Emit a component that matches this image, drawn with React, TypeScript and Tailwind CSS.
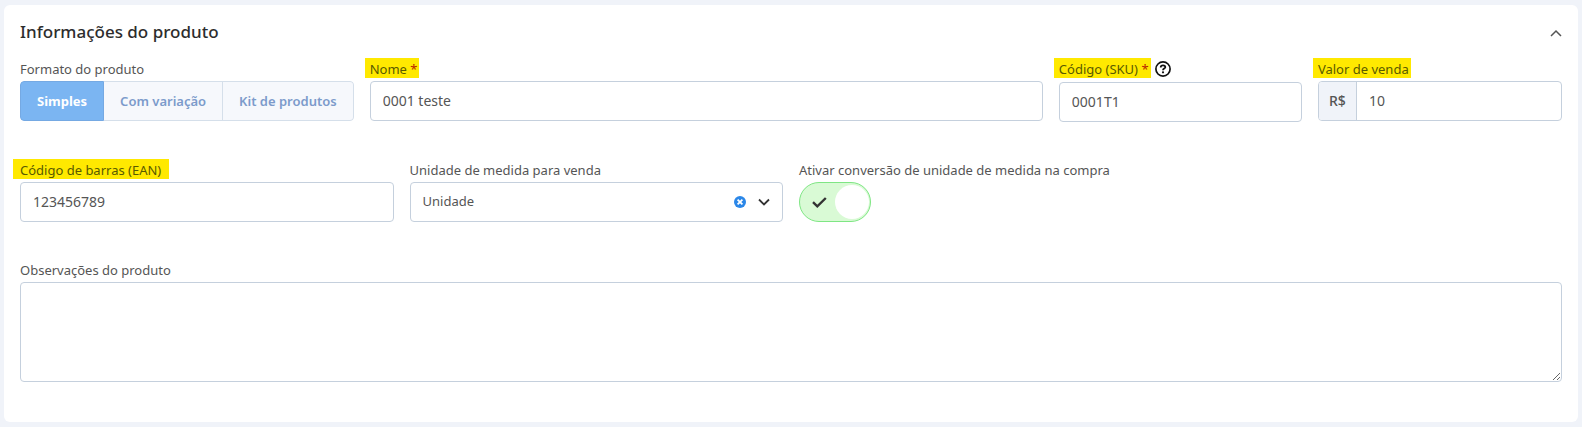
import React, { useState } from 'react';
import clsx from 'clsx';

const FORMATS = ['Simples', 'Com variação', 'Kit de produtos'];

const inputClass =
  'h-10 w-full min-w-0 rounded border border-[#c5d0dd] bg-white px-3 pb-0.5 text-sm text-[#555555] outline-none focus:border-[#3b8beb]';

const Mark = ({ wide, children }: { wide?: boolean; children: React.ReactNode }) => (
  <mark
    className={clsx(
      'inline-block h-5 bg-[#ffe900] align-top whitespace-nowrap text-[#595a00]',
      wide ? '-ml-[7px] pl-[7px] pr-2' : '-ml-[5px] pl-[5px] pr-0.5'
    )}
  >
    {children}
  </mark>
);

const Required = () => <span className="text-[#b81d00]">*</span>;

const App: React.FC = () => {
  const [open, setOpen] = useState(true);
  const [format, setFormat] = useState('Simples');
  const [unit, setUnit] = useState('Unidade');
  const [conversion, setConversion] = useState(true);

  return (
    <main className="min-h-screen bg-[#f0f3f9] px-1 py-[5px] font-['Noto_Sans',sans-serif] text-[13px] leading-[22px] text-[#555555]">
      <section className="rounded-md bg-white px-4 pt-3 pb-10">
        <div className="flex h-[41px] items-start justify-between">
          <h2 className="text-[17px] leading-[30px] font-medium text-[#2d2d2d]">Informações do produto</h2>
          <button type="button" aria-label="Recolher" aria-expanded={open} onClick={() => setOpen(!open)} className="flex h-8 items-center">
            <svg width="12" height="8" viewBox="0 0 12 8" fill="none" stroke="#555" strokeWidth="1.5">
              <path d="M1 7 6 2 11 7" />
            </svg>
          </button>
        </div>

        {open && (
          <form className="flex flex-col gap-[37px]">
            <div className="grid grid-cols-[auto_673fr_243fr_244fr] items-start gap-4">
              <div className="flex flex-col gap-px">
                <span id="formato">Formato do produto</span>
                <div role="group" aria-labelledby="formato" className="flex h-10 overflow-hidden rounded">
                  {FORMATS.map((item) => (
                    <button
                      key={item}
                      type="button"
                      aria-pressed={format === item}
                      onClick={() => setFormat(item)}
                      className={clsx(
                        'border-y border-r px-4 text-[13px] whitespace-nowrap first:rounded-l first:border-l last:rounded-r',
                        format === item
                          ? 'border-[#75a9e3] bg-[#7bb5f2] font-bold text-white'
                          : 'border-[#d5dfea] bg-[#f6f8fc] font-semibold text-[#7c9bcb]'
                      )}
                    >
                      {item}
                    </button>
                  ))}
                </div>
              </div>

              <div className="flex flex-col gap-px">
                <label htmlFor="nome"><Mark>Nome <Required /></Mark></label>
                <input id="nome" defaultValue="0001 teste" className={inputClass} />
              </div>

              <div className="flex flex-col gap-px">
                <div className="flex h-[23px] items-start gap-1">
                  <label htmlFor="sku"><Mark>Código (SKU) <Required /></Mark></label>
                  <button type="button" aria-label="Ajuda" className="flex h-[22px] items-center">
                    <svg width="16" height="16" viewBox="0 0 16 16" fill="none" stroke="#111">
                      <circle cx="8" cy="8" r="7.1" strokeWidth="1.7" />
                      <path d="M5.7 6.5C5.7 5.1 6.7 4.4 8 4.4S10.3 5.1 10.3 6.2C10.3 7.6 8 7.6 8 9.2" strokeWidth="1.8" />
                      <circle cx="8" cy="11.3" r="1.1" fill="#111" stroke="none" />
                    </svg>
                  </button>
                </div>
                <input id="sku" defaultValue="0001T1" className={inputClass} />
              </div>

              <div className="flex flex-col gap-px">
                <label htmlFor="valor"><Mark>Valor de venda</Mark></label>
                <div className="flex h-10 overflow-hidden rounded border border-[#c5d0dd]">
                  <span className="flex w-[38px] shrink-0 items-center justify-center border-r border-[#c5d0dd] bg-[#f0f3f9] text-sm font-medium">R$</span>
                  <input id="valor" defaultValue="10" className="w-full min-w-0 px-3 text-sm outline-none" />
                </div>
              </div>
            </div>

            <div className="grid grid-cols-4 items-start gap-4">
              <div className="flex flex-col gap-px">
                <label htmlFor="ean"><Mark wide>Código de barras (EAN)</Mark></label>
                <input id="ean" defaultValue="123456789" className={inputClass} />
              </div>

              <div className="flex flex-col gap-px">
                <label htmlFor="unidade">Unidade de medida para venda</label>
                <div className="flex h-10 items-center rounded border border-[#c5d0dd] pr-3">
                  <select
                    id="unidade"
                    value={unit}
                    onChange={(e) => setUnit(e.target.value)}
                    className="h-full w-full min-w-0 appearance-none px-3 pb-0.5 outline-none"
                  >
                    <option value=""></option>
                    <option>Unidade</option>
                    <option>Caixa</option>
                  </select>
                  <button type="button" aria-label="Limpar" onClick={() => setUnit('')} className="mr-3 shrink-0">
                    <svg width="12" height="12" viewBox="0 0 12 12">
                      <circle cx="6" cy="6" r="6" fill="#2b87e8" />
                      <path d="M3.6 3.6 8.4 8.4M8.4 3.6 3.6 8.4" stroke="#fff" strokeWidth="1.8" />
                    </svg>
                  </button>
                  <svg className="shrink-0" width="12" height="8" viewBox="0 0 12 8" fill="none" stroke="#333" strokeWidth="1.8">
                    <path d="M1 1.5 6 6.5 11 1.5" />
                  </svg>
                </div>
              </div>

              <div className="flex flex-col gap-px">
                <label htmlFor="conversao" className="whitespace-nowrap">Ativar conversão de unidade de medida na compra</label>
                <button
                  id="conversao"
                  type="button"
                  role="switch"
                  aria-checked={conversion}
                  onClick={() => setConversion(!conversion)}
                  className={clsx(
                    'flex h-10 w-18 items-center justify-between rounded-full border pr-px pl-3',
                    conversion ? 'border-[#7fe684] bg-[#d9fad5]' : 'flex-row-reverse border-[#c5d0dd] bg-[#f0f3f9]'
                  )}
                >
                  <svg width="15" height="11" viewBox="0 0 15 11" fill="none" stroke="#333" strokeWidth="2.4">
                    <path d="M1 5.2 5.3 9.3 13.8 1" />
                  </svg>
                  <span className="size-[34px] rounded-full bg-white" />
                </button>
              </div>
            </div>

            <div className="flex flex-col gap-px">
              <label htmlFor="observacoes">Observações do produto</label>
              <textarea id="observacoes" className="h-[100px] w-full rounded border border-[#c5d0dd] px-3 py-2 text-sm outline-none" />
            </div>
          </form>
        )}
      </section>
    </main>
  );
};

export default App;
